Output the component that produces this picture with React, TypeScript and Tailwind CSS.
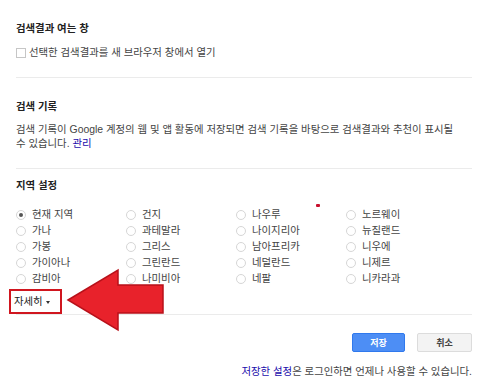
import React from 'react';

const regions = [
  ['현재 지역', '건지', '나우루', '노르웨이'],
  ['가나', '과테말라', '나이지리아', '뉴질랜드'],
  ['가봉', '그리스', '남아프리카', '니우에'],
  ['가이아나', '그린란드', '네덜란드', '니제르'],
  ['감비아', '나미비아', '네팔', '니카라과'],
];

function Radio({ checked }: { checked?: boolean }) {
  return (
    <span className="flex size-[10px] shrink-0 items-center justify-center rounded-full border border-[#d6d6d6] bg-white">
      {checked && <span className="size-[4px] rounded-full bg-[#555]" />}
    </span>
  );
}

export default function App() {
  return (
    <div
      className="relative h-[383px] w-[479px] overflow-hidden bg-white pl-4 pr-[7px] text-[10.4px] leading-[14px] text-[#444]"
      style={{ fontFamily: '"Liberation Sans", "Noto Sans CJK KR", sans-serif' }}
    >
      {/* 검색결과 여는 창 */}
      <div className="border-b border-[#ebebeb] pb-[17px] pt-[22px]">
        <h2 className="font-bold text-[#222]">검색결과 여는 창</h2>
        <label className="mt-[10px] flex items-center gap-[3px]">
          <span className="size-[10px] border border-[#c6c6c6] bg-white" />
          <span>선택한 검색결과를 새 브라우저 창에서 열기</span>
        </label>
      </div>

      {/* 검색 기록 */}
      <div className="border-b border-[#ebebeb] pb-[17px] pt-[22px]">
        <h2 className="font-bold text-[#222]">검색 기록</h2>
        <p className="mt-[9px]">
          검색 기록이 Google 계정의 웹 및 앱 활동에 저장되면 검색 기록을 바탕으로 검색결과와 추천이 표시될
          <br />수 있습니다. <span className="text-[#1a0dab]">관리</span>
        </p>
      </div>

      {/* 지역 설정 */}
      <div className="border-b border-[#ebebeb] pt-[10px]">
        <h2 className="font-bold text-[#222]">지역 설정</h2>
        <div className="mt-[14px] grid grid-cols-[110px_110px_110px_110px] auto-rows-[16px]">
          {regions.flatMap((row, r) =>
            row.map((name, c) => (
              <div key={`${r}-${c}`} className="flex items-center gap-[6px]">
                <Radio checked={r === 0 && c === 0} />
                <span>{name}</span>
              </div>
            )),
          )}
        </div>
        <div className="-ml-[7px] mt-[2px] flex h-[25px] w-[53px] items-center border-2 border-[#d0161f] pl-[3px] text-[#222]">
          자세히
          <span className="ml-[3px] mt-[1px] border-x-[2.5px] border-t-[3px] border-x-transparent border-t-[#333]" />
        </div>
      </div>

      {/* Buttons */}
      <div className="mt-[18px] flex justify-end gap-[12px]">
        <button
          type="button"
          className="flex h-[19px] w-[53px] items-center justify-center rounded-[2px] border border-[#3079ed] bg-[#4d8ef5] text-[9px] font-bold text-white"
        >
          저장
        </button>
        <button
          type="button"
          className="flex h-[19px] w-[55px] items-center justify-center rounded-[2px] border border-[#dcdcdc] bg-[#f3f3f3] text-[9px] font-bold text-[#444]"
        >
          취소
        </button>
      </div>

      <p className="mt-[13px] text-right">
        <span className="text-[#1a0dab]">저장한 설정</span>은 로그인하면 언제나 사용할 수 있습니다.
      </p>

      {/* Annotation overlays */}
      <span className="absolute left-[316px] top-[204px] h-[3px] w-[4px] rounded-[1px] bg-[#c8102e]" />
      <svg className="absolute left-[66px] top-[268px]" width="100" height="64" viewBox="0 0 100 64">
        <polygon
          points="2,32 52,2 52,17 97,17 97,45 52,45 52,62"
          fill="#e8222b"
          stroke="#b8111a"
          strokeWidth="1.5"
          strokeLinejoin="miter"
        />
      </svg>
    </div>
  );
}
